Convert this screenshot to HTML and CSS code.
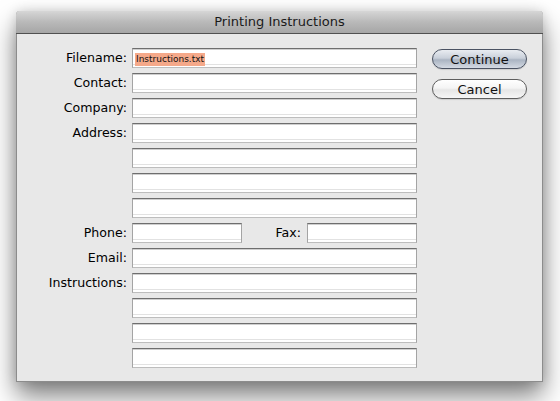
FILE: index.html
```html
<!DOCTYPE html>
<html>
<head>
<meta charset="utf-8">
<link rel="stylesheet" href="styles.css">
</head>
<body>
<div class="window">
  <div class="titlebar">Printing Instructions</div>
  <div class="content">
    <div class="form">
      <div class="label">Filename:</div><div class="field"><span class="sel">Instructions.txt</span></div>
      <div class="label">Contact:</div><div class="field"></div>
      <div class="label">Company:</div><div class="field"></div>
      <div class="label">Address:</div><div class="field"></div>
      <div class="label"></div><div class="field"></div>
      <div class="label"></div><div class="field"></div>
      <div class="label"></div><div class="field"></div>
      <div class="label">Phone:</div>
      <div class="pair">
        <div class="field short"></div>
        <div class="label fax">Fax:</div>
        <div class="field short"></div>
      </div>
      <div class="label">Email:</div><div class="field"></div>
      <div class="label">Instructions:</div><div class="field"></div>
      <div class="label"></div><div class="field"></div>
      <div class="label"></div><div class="field"></div>
      <div class="label"></div><div class="field"></div>
    </div>
    <div class="buttons">
      <button class="btn default">Continue</button>
      <button class="btn">Cancel</button>
    </div>
  </div>
</div>
</body>
</html>
```
FILE: styles.css
```css
html, body {
  margin: 0;
  padding: 0;
  background: #ffffff;
}
body {
  width: 560px;
  height: 401px;
  overflow: hidden;
  font-family: "DejaVu Sans", "Liberation Sans", sans-serif;
  font-size: 13px;
  color: #000;
}
.window {
  margin: 11px 0 0 16px;
  width: 525px;
  height: 370px;
  background: #e8e8e8;
  border: 1px solid #8c8c8c;
  border-top: none;
  border-radius: 4px 4px 0 0;
  box-shadow: 0 14px 26px rgba(0, 0, 0, 0.5), 0 0 12px rgba(0, 0, 0, 0.14);
  display: flex;
  flex-direction: column;
}
.titlebar {
  height: 22px;
  line-height: 22px;
  text-align: center;
  color: #1a1a1a;
  background: linear-gradient(#d6d6d6, #b9b9b9 50%, #a6a6a6);
  border-bottom: 1px solid #505050;
  border-radius: 4px 4px 0 0;
  margin: 0 -1px;
}
.content {
  display: flex;
  padding-top: 14px;
  gap: 15px;
}
.form {
  display: grid;
  grid-template-columns: 110px 285px;
  grid-auto-rows: 20px;
  column-gap: 5px;
  row-gap: 5px;
}
.label {
  text-align: right;
  line-height: 20px;
  font-size: 12.6px;
  white-space: nowrap;
}
.field {
  box-sizing: border-box;
  height: 20px;
  background: #ffffff;
  border: 1px solid #a4a4a4;
  border-top-color: #6e6e6e;
  border-bottom-color: #bdbdbd;
  box-shadow: inset 0 1px 0 #cfcfcf, inset 0 -2px 0 #fff, inset 0 -3px 0 #e2e2e2;
  padding: 1px 2px;
}
.pair {
  display: flex;
  gap: 6px;
}
.field.short {
  width: 110px;
  flex: none;
}
.fax {
  flex: 1;
}
.sel {
  display: inline-block;
  background: #f5a98a;
  font-size: 9px;
  line-height: 13px;
  height: 13px;
  padding: 0 1px;
  color: #111;
}
.buttons {
  display: flex;
  flex-direction: column;
  gap: 10px;
  padding-top: 1px;
}
.btn {
  width: 95px;
  height: 20px;
  box-sizing: border-box;
  border-radius: 10px;
  border: 1px solid #5e5e5e;
  background: linear-gradient(#ffffff, #f4f4f4 45%, #e6e6e6 55%, #f6f6f6);
  font-family: "DejaVu Sans", "Liberation Sans", sans-serif;
  font-size: 13px;
  line-height: 17px;
  color: #111;
  padding: 0;
  box-shadow: 0 1px 1px rgba(0, 0, 0, 0.12);
}
.btn.default {
  border-color: #4a5262;
  background: linear-gradient(#e9ecf1, #c9d0da 45%, #aab4c2 55%, #d4dae3);
}
```
